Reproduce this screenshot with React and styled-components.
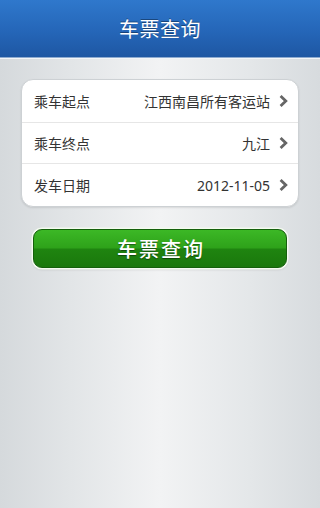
import React from 'react';
import styled, { createGlobalStyle } from 'styled-components';

const GlobalStyle = createGlobalStyle`
  html, body {
    margin: 0;
    padding: 0;
  }
  body {
    font-family: "Noto Sans", "Noto Sans CJK SC", sans-serif;
  }
`;

const Screen = styled.div`
  width: 320px;
  height: 508px;
  overflow: hidden;
  background: linear-gradient(
    to right,
    #d5d9dc 0%,
    #e2e5e7 22%,
    #f2f3f4 50%,
    #e4e7e9 78%,
    #d7dbde 100%
  );
`;

const Header = styled.header`
  height: 57px;
  display: flex;
  align-items: center;
  justify-content: center;
  background: linear-gradient(to bottom, #2f78cc 0%, #2566b8 55%, #1e57a3 100%);
  border-bottom: 1px solid #8eabd0;
  box-shadow: 0 1px 0 #f2f5f8;
`;

const Title = styled.h1`
  margin: 0;
  color: #fff;
  font-size: 20px;
  font-weight: 400;
  letter-spacing: 0.5px;
  text-shadow: 0 -1px 0 rgba(0, 0, 0, 0.35);
`;

const Body = styled.main`
  display: flex;
  flex-direction: column;
  padding: 21px 21px 0;
`;

const Card = styled.div`
  background: #fff;
  border-radius: 12px;
  border: 1px solid #cdd1d4;
  box-shadow: 0 1px 2px rgba(0, 0, 0, 0.1);
  overflow: hidden;
`;

const Row = styled.div`
  display: flex;
  align-items: center;
  height: ${(p) => p.$h}px;
  padding: 0 10px 0 12px;
  border-top: ${(p) => (p.$first ? 'none' : '1px solid #e6e6e6')};
  font-size: 14px;
  color: #333;
`;

const Label = styled.span`
  flex: 1;
`;

const Value = styled.span`
  color: #333;
  margin-right: 9px;
`;

const Chevron = () => (
  <svg width="9" height="12" viewBox="0 0 9 12">
    <path d="M1.6 1 L6.8 6 L1.6 11" fill="none" stroke="#666" strokeWidth="2.8" />
  </svg>
);

const ButtonWrap = styled.div`
  display: flex;
  padding: 22px 12px 0;
`;

const QueryButton = styled.button`
  flex: 1;
  height: 39px;
  border-radius: 9px;
  border: 1px solid #15600c;
  box-shadow: 0 0 0 1.5px #f4fbf0, 0 1px 3px rgba(0, 0, 0, 0.25);
  background: linear-gradient(
    to bottom,
    #3cb826 0%,
    #2ea21a 48%,
    #1f8410 52%,
    #1a780c 100%
  );
  color: #fff;
  font-family: "Noto Sans", "Noto Sans CJK SC", sans-serif;
  font-size: 20px;
  font-weight: 500;
  letter-spacing: 2px;
  padding: 0 0 0 2px;
  text-shadow: 0 1px 1px rgba(0, 0, 0, 0.45);
  cursor: pointer;
`;

const rows = [
  { label: '乘车起点', value: '江西南昌所有客运站', h: 42 },
  { label: '乘车终点', value: '九江', h: 40 },
  { label: '发车日期', value: '2012-11-05', h: 42 },
];

const App = () => (
  <>
    <GlobalStyle />
    <Screen>
      <Header>
        <Title>车票查询</Title>
      </Header>
      <Body>
        <Card>
          {rows.map((r, i) => (
            <Row key={r.label} $first={i === 0} $h={r.h}>
              <Label>{r.label}</Label>
              <Value>{r.value}</Value>
              <Chevron />
            </Row>
          ))}
        </Card>
        <ButtonWrap>
          <QueryButton>车票查询</QueryButton>
        </ButtonWrap>
      </Body>
    </Screen>
  </>
);

export default App;
